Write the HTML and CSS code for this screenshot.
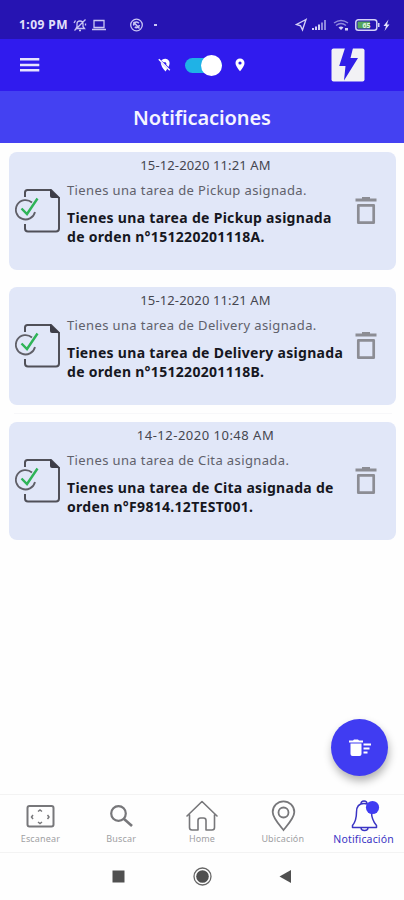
FILE: index.html
```html
<!DOCTYPE html>
<html lang="es">
<head>
    <meta charset="UTF-8">
    <meta name="viewport" content="width=device-width, initial-scale=1.0">
    <title>Notificaciones</title>
    <link rel="stylesheet" href="styles.css">
</head>
<body>

    <!-- shared icons -->
    <svg class="sprite" width="0" height="0">
        <symbol id="icon-task" viewBox="0 0 46 46">
            <path d="M10 9V4.500q0-2.500 2.500-2.500H36l8 8V40.500q0 3-3 3H13q-3 0-3-3V36" fill="none" stroke="#505058" stroke-width="2"/>
            <path d="M35 1v7q0 2 2 2h8z" fill="#3e3e48"/>
            <path d="M17 14.500A9.700 9.700 0 1 0 20 24" fill="none" stroke="#606068" stroke-width="1.800"/>
            <path d="M6.500 20.500l5.500 5.500L22.500 10.500" fill="none" stroke="#2fb457" stroke-width="2.400"/>
        </symbol>
        <symbol id="icon-trash" viewBox="0 0 22 28">
            <path d="M0.500 3h21M7 1.500h8" fill="none" stroke="#8c8d94" stroke-width="2.800"/>
            <path d="M3.300 8.300h15.400v17.400H3.300z" fill="none" stroke="#8c8d94" stroke-width="2.700" stroke-linejoin="round"/>
        </symbol>
    </svg>

    <div class="status-bar">
        <span class="time">1:09 PM</span>
        <svg class="status-left" width="90" height="14" viewBox="0 0 90 14" fill="none" stroke="#c9c5f4" stroke-width="1.300">
            <path d="M3 10.500h8.500L10 8.500V6Q10 3 7 3T4 6v2.500zM6 12.500h2M1.500 12.500L12.500 1.500M1 5l1.500-2.500M12.500 7.500v-2"/>
            <path d="M21 2.500h10v7H21zM19 11.500h14"/>
            <circle cx="63.500" cy="7" r="5.800"/>
            <path d="M60.800 7.500a2.800 2.800 0 0 1 5-2.300M66.300 7a2.800 2.800 0 0 1-4.500 2M60.500 4l6 6.500" stroke-width="1.600"/>
            <path d="M81 7h3" stroke-width="2"/>
        </svg>
        <svg class="status-right" width="96" height="14" viewBox="0 0 96 14">
            <path d="M11 1.500L1.500 6.500l4 1.300L7.500 12z" fill="none" stroke="#d5d2f7" stroke-width="1.400"/>
            <path d="M17 12v-2h2v2zM20 12V8.500h2V12zM23 12V6.500h2V12z" fill="#d5d2f7"/>
            <path d="M26 12V4.500h2V12zM29 12V2h2v10z" fill="#8f89dd"/>
            <path d="M39 5q7-5 14 0M41 7.500q5-4 10 0" fill="none" stroke="#8f89dd" stroke-width="1.500"/>
            <path d="M43.500 9.500q2.500-2 5 0L46 12zM50 10h3v2.500h-3z" fill="#d5d2f7"/>
            <rect x="60.800" y="1.800" width="21" height="10.500" rx="2.500" fill="none" stroke="#d5d2f7" stroke-width="1.500"/>
            <rect x="62.500" y="3.500" width="12.500" height="7" fill="#55a55c"/>
            <path d="M83 5h1.500v4H83z" fill="#d5d2f7"/>
            <text x="71.500" y="10" text-anchor="middle" class="battery">65</text>
            <path d="M93.500 1.500L88.500 8h2.500l-1.500 5 5-6.500h-2.500z" fill="#e4e2fb"/>
        </svg>
    </div>

    <header class="header">
        <svg class="menu" width="20" height="16" viewBox="0 0 20 16" stroke="#e6e3ff" stroke-width="2.500">
            <path d="M0 2.300h19.300M0 7.900h19.300M0 13.300h19.300"/>
        </svg>
        <div class="location">
            <svg width="14" height="14" viewBox="0 0 14 14">
                <path d="M3.200 2.400Q5 .5 7.500 .7 11.500 1.300 11.600 5.300 11.500 7.200 10.400 9L8.200 6.600A1.600 1.600 0 0 0 6 4.400zM2.700 4.300L9.300 10.700 7.500 13.500Q2.800 8.500 2.700 4.300z" fill="#fff"/>
                <path d="M.8 1.200l11 11" stroke="#fff" stroke-width="1.300"/>
            </svg>
            <div class="switch"><span class="knob"></span></div>
            <svg width="10" height="14" viewBox="0 0 10 14">
                <path d="M5 .5A4.500 4.500 0 0 1 9.500 5Q9.500 8 5 13.300Q.5 8 .5 5A4.500 4.500 0 0 1 5 .5zM5 3.400A1.600 1.600 0 1 0 5 6.600A1.600 1.600 0 1 0 5 3.400z" fill="#fff" fill-rule="evenodd"/>
            </svg>
        </div>
        <svg class="brand" width="34" height="34" viewBox="0 0 34 34">
            <rect x=".5" y=".5" width="33" height="33" rx="2" fill="#f2f2f5"/>
            <path d="M14 0L8.200 18h6.300L13 32.500 27 10h-7.500L22 0z" fill="#301fe8"/>
        </svg>
    </header>

    <h1 class="page-title">Notificaciones</h1>

    <main class="list">
        <article class="card">
            <time>15-12-2020 11:21 AM</time>
            <div class="card-row">
                <svg class="task"><use href="#icon-task"/></svg>
                <div class="card-text">
                    <p class="summary">Tienes una tarea de Pickup asignada.</p>
                    <p class="detail">Tienes una tarea de Pickup asignada<br>de orden n°151220201118A.</p>
                </div>
                <svg class="trash"><use href="#icon-trash"/></svg>
            </div>
        </article>
        <article class="card">
            <time>15-12-2020 11:21 AM</time>
            <div class="card-row">
                <svg class="task"><use href="#icon-task"/></svg>
                <div class="card-text">
                    <p class="summary">Tienes una tarea de Delivery asignada.</p>
                    <p class="detail">Tienes una tarea de Delivery asignada<br>de orden n°151220201118B.</p>
                </div>
                <svg class="trash"><use href="#icon-trash"/></svg>
            </div>
        </article>
        <hr class="divider">
        <article class="card">
            <time class="wide">14-12-2020 10:48 AM</time>
            <div class="card-row">
                <svg class="task"><use href="#icon-task"/></svg>
                <div class="card-text">
                    <p class="summary">Tienes una tarea de Cita asignada.</p>
                    <p class="detail">Tienes una tarea de Cita asignada de<br>orden n°F9814.12TEST001.</p>
                </div>
                <svg class="trash"><use href="#icon-trash"/></svg>
            </div>
        </article>
    </main>

    <button class="fab" aria-label="Borrar todas">
        <svg width="22" height="18" viewBox="0 0 22 18" fill="#fff">
            <path d="M0 1.500h4L5 .5h4l1 1h4v2H0zM1.500 4.500h11V15q0 2-2 2h-7q-2 0-2-2zM14.500 4.500H22v2h-7.500zM14.500 8.500h6v2h-6zM14.500 12.500h4v2h-4z"/>
        </svg>
    </button>

    <nav class="tabs">
        <a class="tab">
            <svg width="34" height="34" viewBox="0 0 34 34" fill="none" stroke="#77777a" stroke-width="2">
                <rect x="4.500" y="6" width="26" height="20.500" rx="2"/>
                <path d="M15 11.500l2-1.500 2 1.500M15 22l2 1.500 2-1.500M10 15l-1.500 2 1.500 2M24.500 15l1.500 2-1.500 2" stroke-width="1.500"/>
            </svg>
            <span>Escanear</span>
        </a>
        <a class="tab">
            <svg width="34" height="34" viewBox="0 0 34 34" fill="none" stroke="#77777a">
                <circle cx="14.500" cy="13.500" r="7.300" stroke-width="2.200"/>
                <path d="M19.500 18.500l8.500 7.500" stroke-width="2.600"/>
            </svg>
            <span>Buscar</span>
        </a>
        <a class="tab">
            <svg width="34" height="34" viewBox="0 0 34 34" fill="none" stroke="#77777a" stroke-width="1.600" stroke-linecap="round" stroke-linejoin="round">
                <path d="M2 16L17 1.500l15 14.500M4.500 14.500v13q0 2.500 2.500 2.500h6v-9.500q0-2.500 2.500-2.500h3q2.500 0 2.500 2.500V30h6q2.500 0 2.500-2.500v-13"/>
            </svg>
            <span>Home</span>
        </a>
        <a class="tab">
            <svg width="34" height="34" viewBox="0 0 34 34" fill="none" stroke="#77777a" stroke-width="1.800">
                <path d="M17.500 1.300A10.800 10.800 0 0 1 28.300 12C28.300 18 21.500 25 17.500 30 13.500 25 6.700 18 6.700 12A10.800 10.800 0 0 1 17.500 1.300z"/>
                <circle cx="17.500" cy="12.500" r="5"/>
            </svg>
            <span>Ubicación</span>
        </a>
        <a class="tab active">
            <svg width="34" height="34" viewBox="0 0 34 34" fill="none" stroke="#3a34c4" stroke-width="1.500" stroke-linejoin="round">
                <path d="M14 4a3 3 0 0 1 6 0M17 3.500C12 3.500 9.500 7 9.500 12C9.500 19 8.500 22 5.500 25.500v2h24v-2C26.500 22 24.500 19 24.500 12C24.500 7 22 3.500 17 3.500zM14 27.500a3.500 3 0 0 0 7 0"/>
                <circle cx="25.500" cy="7.500" r="6.600" fill="#403cf2" stroke="none"/>
            </svg>
            <span>Notificación</span>
        </a>
    </nav>

    <div class="system-nav">
        <svg width="20" height="20" viewBox="0 0 20 20"><path d="M4.500 3.500h12v12h-12z" fill="#505050"/></svg>
        <svg width="20" height="20" viewBox="0 0 20 20"><circle cx="10.500" cy="9.500" r="8.500" fill="none" stroke="#666" stroke-width="1.300"/><circle cx="10.500" cy="9.500" r="6.300" fill="#505050"/></svg>
        <svg width="20" height="20" viewBox="0 0 20 20"><path d="M15 3v13L3.500 9.500z" fill="#505050"/></svg>
    </div>

</body>
</html>
```

FILE: styles.css
```css
* {
    box-sizing: border-box;
}

body {
    margin: 0;
    height: 900px;
    display: flex;
    flex-direction: column;
    position: relative;
    overflow: hidden;
    background: #fefefe;
    font-family: "Noto Sans", "Open Sans", sans-serif;
}

p, h1 {
    margin: 0;
}

.sprite {
    position: absolute;
}

/* top bars */
.status-bar {
    height: 39px;
    padding: 10px 13px 0 19px;
    display: flex;
    align-items: center;
    background: #2614b2;
}

.time {
    width: 54px;
    color: #e3e0fb;
    font-size: 12px;
    font-weight: 700;
    letter-spacing: 0.45px;
    white-space: nowrap;
}

.status-right {
    margin-left: auto;
}

.battery {
    font-size: 7px;
    font-weight: 700;
    fill: #e2f5e0;
}

.header {
    height: 52px;
    padding: 0 39px 0 20px;
    display: flex;
    align-items: center;
    justify-content: space-between;
    background: #301bee;
}

.location {
    display: flex;
    align-items: center;
    gap: 13px;
    margin-left: 32px;
}

.switch {
    width: 37px;
    height: 15px;
    border-radius: 8px;
    background: #1fb2e6;
    display: flex;
    align-items: center;
    justify-content: flex-end;
}

.knob {
    width: 21px;
    height: 21px;
    flex: none;
    border-radius: 50%;
    background: #fff;
}

.page-title {
    height: 52px;
    background: #4441f2;
    color: #f5f4ff;
    font-size: 20px;
    font-weight: 600;
    line-height: 53px;
    letter-spacing: -0.1px;
    text-align: center;
}

/* notifications */
.list {
    flex: 1;
    padding: 9px 8px 0 9px;
    display: flex;
    flex-direction: column;
    gap: 17px;
}

.card {
    height: 118px;
    border-radius: 8px;
    background: #e1e7f8;
}

.divider {
    width: 378px;
    height: 1px;
    margin: -9px auto;
    border: none;
    background: #f7f7f9;
}

.card time {
    display: block;
    height: 26px;
    padding-left: 6px;
    color: #45464f;
    font-size: 13px;
    line-height: 26px;
    letter-spacing: 0.13px;
    text-align: center;
}

.card time.wide {
    letter-spacing: 0.5px;
}

.card-row {
    display: flex;
    padding: 0 19px 0 6px;
}

.task {
    width: 46px;
    height: 46px;
    margin-top: 10px;
}

.card-text {
    flex: 1;
    padding-left: 6px;
    white-space: nowrap;
}

.summary {
    color: #60616b;
    font-size: 13px;
    line-height: 25px;
    letter-spacing: 0.38px;
}

.detail {
    padding-top: 5px;
    color: #16171f;
    font-size: 14px;
    font-weight: 700;
    line-height: 19px;
    letter-spacing: 0.3px;
}

.trash {
    width: 22px;
    height: 28px;
    margin-top: 19px;
}

.fab {
    position: absolute;
    left: 331px;
    top: 719px;
    width: 57px;
    height: 57px;
    padding: 0;
    border: none;
    border-radius: 50%;
    background: #403cf2;
    box-shadow: 1px 5px 8px rgba(0, 0, 0, 0.3);
    display: flex;
    align-items: center;
    justify-content: center;
}

/* bottom bars */
.tabs {
    height: 59px;
    padding-top: 5px;
    border-top: 1px solid #f3f3f3;
    border-bottom: 1px solid #f3f3f3;
    display: grid;
    grid-template-columns: repeat(5, 1fr);
}

.tab {
    display: flex;
    flex-direction: column;
    align-items: center;
    color: #a0a0a3;
    font-size: 9px;
    line-height: 10px;
    letter-spacing: 0.15px;
}

.tab.active {
    color: #3a34c4;
    font-size: 10.5px;
}

.system-nav {
    height: 47px;
    display: flex;
    align-items: center;
    justify-content: center;
    gap: 64px;
}
```
